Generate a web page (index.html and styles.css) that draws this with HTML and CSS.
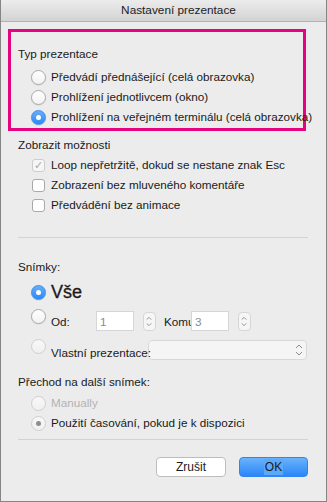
FILE: index.html
```html
<!DOCTYPE html>
<html>
<head>
    <title>Nastavení prezentace</title>
    <meta charset="UTF-8">
    <link rel="stylesheet" href="styles.css">
</head>
<body>
    <div class="window">
        <div class="titlebar">Nastavení prezentace</div>

        <!-- Typ prezentace -->
        <div class="highlight-box">
            <div class="group-label">Typ prezentace</div>
            <div class="radio-list">
                <div class="row"><span class="radio"></span><span class="label">Předvádí přednášející (celá obrazovka)</span></div>
                <div class="row"><span class="radio"></span><span class="label">Prohlížení jednotlivcem (okno)</span></div>
                <div class="row"><span class="radio checked"></span><span class="label">Prohlížení na veřejném terminálu (celá obrazovka)</span></div>
            </div>
        </div>

        <!-- Zobrazit možnosti -->
        <div class="section options">
            <div class="group-label">Zobrazit možnosti</div>
            <div class="check-list">
                <div class="row"><span class="checkbox disabled">&#10003;</span><span class="label">Loop nepřetržitě, dokud se nestane znak Esc</span></div>
                <div class="row"><span class="checkbox"></span><span class="label">Zobrazení bez mluveného komentáře</span></div>
                <div class="row"><span class="checkbox"></span><span class="label">Předvádění bez animace</span></div>
            </div>
        </div>

        <div class="separator first"></div>

        <!-- Snímky -->
        <div class="section slides">
            <div class="group-label">Snímky:</div>
            <div class="radio-list">
                <div class="row big"><span class="radio checked"></span><span class="label">Vše</span></div>
                <div class="row range">
                    <span class="radio"></span>
                    <span class="label from">Od:</span>
                    <span class="field">1</span>
                    <span class="stepper">
                        <svg width="13" height="19" viewBox="0 0 13 19"><path d="M4 7.5 L6.5 5 L9 7.5 M4 11.5 L6.5 14 L9 11.5" fill="none" stroke="#8c8c8c" stroke-width="1"/></svg>
                    </span>
                    <span class="label to">Komu</span>
                    <span class="field">3</span>
                    <span class="stepper">
                        <svg width="13" height="19" viewBox="0 0 13 19"><path d="M4 7.5 L6.5 5 L9 7.5 M4 11.5 L6.5 14 L9 11.5" fill="none" stroke="#8c8c8c" stroke-width="1"/></svg>
                    </span>
                </div>
                <div class="row custom">
                    <span class="radio disabled"></span>
                    <span class="label custom-label">Vlastní prezentace:</span>
                    <span class="dropdown">
                        <svg width="10" height="16" viewBox="0 0 10 16"><path d="M2 6 L5 3 L8 6 M2 10 L5 13 L8 10" fill="none" stroke="#8c8c8c" stroke-width="1"/></svg>
                    </span>
                </div>
            </div>
        </div>

        <!-- Přechod na další snímek -->
        <div class="section advance">
            <div class="group-label">Přechod na další snímek:</div>
            <div class="radio-list">
                <div class="row"><span class="radio disabled"></span><span class="label muted">Manually</span></div>
                <div class="row"><span class="radio disabled checked-gray"></span><span class="label">Použití časování, pokud je k dispozici</span></div>
            </div>
        </div>

        <div class="separator second"></div>

        <div class="buttons">
            <button class="cancel-button">Zrušit</button>
            <button class="ok-button"><span class="ok-text">OK</span></button>
        </div>
    </div>
</body>
</html>
```

FILE: styles.css
```css
body, html {
    margin: 0;
    padding: 0;
    box-sizing: border-box;
}

*, *:before, *:after {
    box-sizing: inherit;
}

body {
    font-family: "Liberation Sans", Arial, sans-serif;
    font-size: 11.7px;
    color: #1a1a1a;
    background-color: #ececec;
}

.window {
    width: 327px;
    height: 502px;
    background-color: #ececec;
    border-left: 1px solid #858585;
    border-right: 1px solid #858585;
    border-bottom: 1px solid #858585;
    overflow: hidden;
}

.titlebar {
    height: 22px;
    line-height: 21px;
    padding-left: 30px;
    text-align: center;
    font-size: 11.8px;
    color: #222;
    background: linear-gradient(#ececec, #d3d3d3);
    border-bottom: 1px solid #b3b3b3;
}

.highlight-box {
    margin: 7px 0 0 7px;
    width: 298px;
    height: 102px;
    border: 3px solid #e6037f;
    padding: 12px 0 0 7px;
}

.group-label {
    height: 20px;
    line-height: 20px;
    white-space: nowrap;
}

.row {
    display: flex;
    align-items: center;
    height: 20px;
    white-space: nowrap;
}

.label {
    line-height: 20px;
}

.highlight-box .radio-list {
    margin-top: 3px;
    padding-left: 13px;
}

.radio {
    width: 15px;
    height: 15px;
    flex: none;
    border-radius: 50%;
    border: 1px solid #a9a9a9;
    background: linear-gradient(#ffffff, #f2f2f2);
    box-shadow: 0 0.5px 1px rgba(0, 0, 0, 0.12);
    margin-right: 5px;
    display: flex;
    align-items: center;
    justify-content: center;
}

.radio.checked {
    border-color: #3a8ef0;
    background: linear-gradient(#67aefb, #2d88f6);
}

.radio.checked:after {
    content: "";
    width: 5px;
    height: 5px;
    border-radius: 50%;
    background-color: #fff;
}

.radio.disabled {
    border-color: #cfcfcf;
    background: linear-gradient(#f8f8f8, #f0f0f0);
    box-shadow: none;
}

.radio.checked-gray:after {
    content: "";
    width: 5px;
    height: 5px;
    border-radius: 50%;
    background-color: #8e8e8e;
}

.section {
    padding-left: 17px;
}

.options {
    margin-top: 4px;
}

.check-list {
    padding-left: 14px;
}

.checkbox {
    width: 13px;
    height: 13px;
    flex: none;
    border: 1px solid #a9a9a9;
    border-radius: 3px;
    background-color: #fff;
    margin-right: 6px;
    font-size: 11px;
    line-height: 11px;
    text-align: center;
    color: #a8a8a8;
}

.checkbox.disabled {
    border-color: #cdcdcd;
    background-color: #f6f6f6;
}

.separator {
    height: 1px;
    background-color: #d3d3d3;
    margin-left: 17px;
    margin-right: 18px;
}

.separator.first {
    margin-top: 22px;
}

.slides {
    margin-top: 19px;
}

.slides .radio-list {
    padding-left: 13px;
}

.row.big {
    height: 24px;
    margin-top: 3px;
}

.row.big .label {
    font-size: 18px;
    line-height: 24px;
    -webkit-text-stroke: 0.3px #1a1a1a;
}

.row.range {
    height: 26px;
    margin-top: 5px;
    align-items: flex-start;
}

.from {
    width: 45px;
    margin-top: 3px;
}

.field {
    width: 38px;
    height: 20px;
    margin-top: 2px;
    background-color: #fff;
    border: 1px solid #d6d6d6;
    color: #8a8a8a;
    padding-left: 3px;
    line-height: 19px;
}

.stepper {
    width: 13px;
    height: 19px;
    margin-top: 3px;
    margin-left: 9px;
    margin-right: 8px;
    border: 1px solid #d6d6d6;
    border-radius: 4px;
    background-color: #f6f6f6;
    display: flex;
}

.stepper svg {
    margin-left: -1px;
    margin-top: -1px;
}

.to {
    width: 27px;
    margin-top: 3px;
}

.row.custom {
    height: 24px;
    margin-top: 4px;
    align-items: flex-start;
}

.custom-label {
    width: 97px;
    margin-top: 4px;
    position: relative;
    z-index: 1;
}

.dropdown {
    flex: 1;
    height: 20px;
    margin-top: 1px;
    margin-right: 19px;
    border: 1px solid #d8d8d8;
    border-radius: 4px;
    background-color: #f5f5f5;
    display: flex;
    justify-content: flex-end;
    align-items: center;
    padding-right: 2px;
}

.advance {
    margin-top: 9px;
}

.advance .radio-list {
    padding-left: 13px;
    margin-top: 1px;
}

.muted {
    color: #b3b3b3;
}

.separator.second {
    margin-top: 6px;
}

.buttons {
    display: flex;
    justify-content: flex-end;
    margin-top: 17px;
    margin-right: 18px;
}

button {
    font-family: "Liberation Sans", Arial, sans-serif;
    font-size: 12px;
    height: 20px;
    padding: 0;
    cursor: pointer;
    border-radius: 4px;
}

.cancel-button {
    width: 70px;
    background-color: #fff;
    border: 1px solid #bdbdbd;
    color: #1a1a1a;
    margin-right: 13px;
}

.ok-button {
    width: 69px;
    border: 1px solid #2f86f2;
    background: linear-gradient(#6ab3fc, #2a86f8);
    color: #1a1a1a;
}

.ok-text {
    background-color: #5aa9fb;
    padding: 1px 1px;
}
```
